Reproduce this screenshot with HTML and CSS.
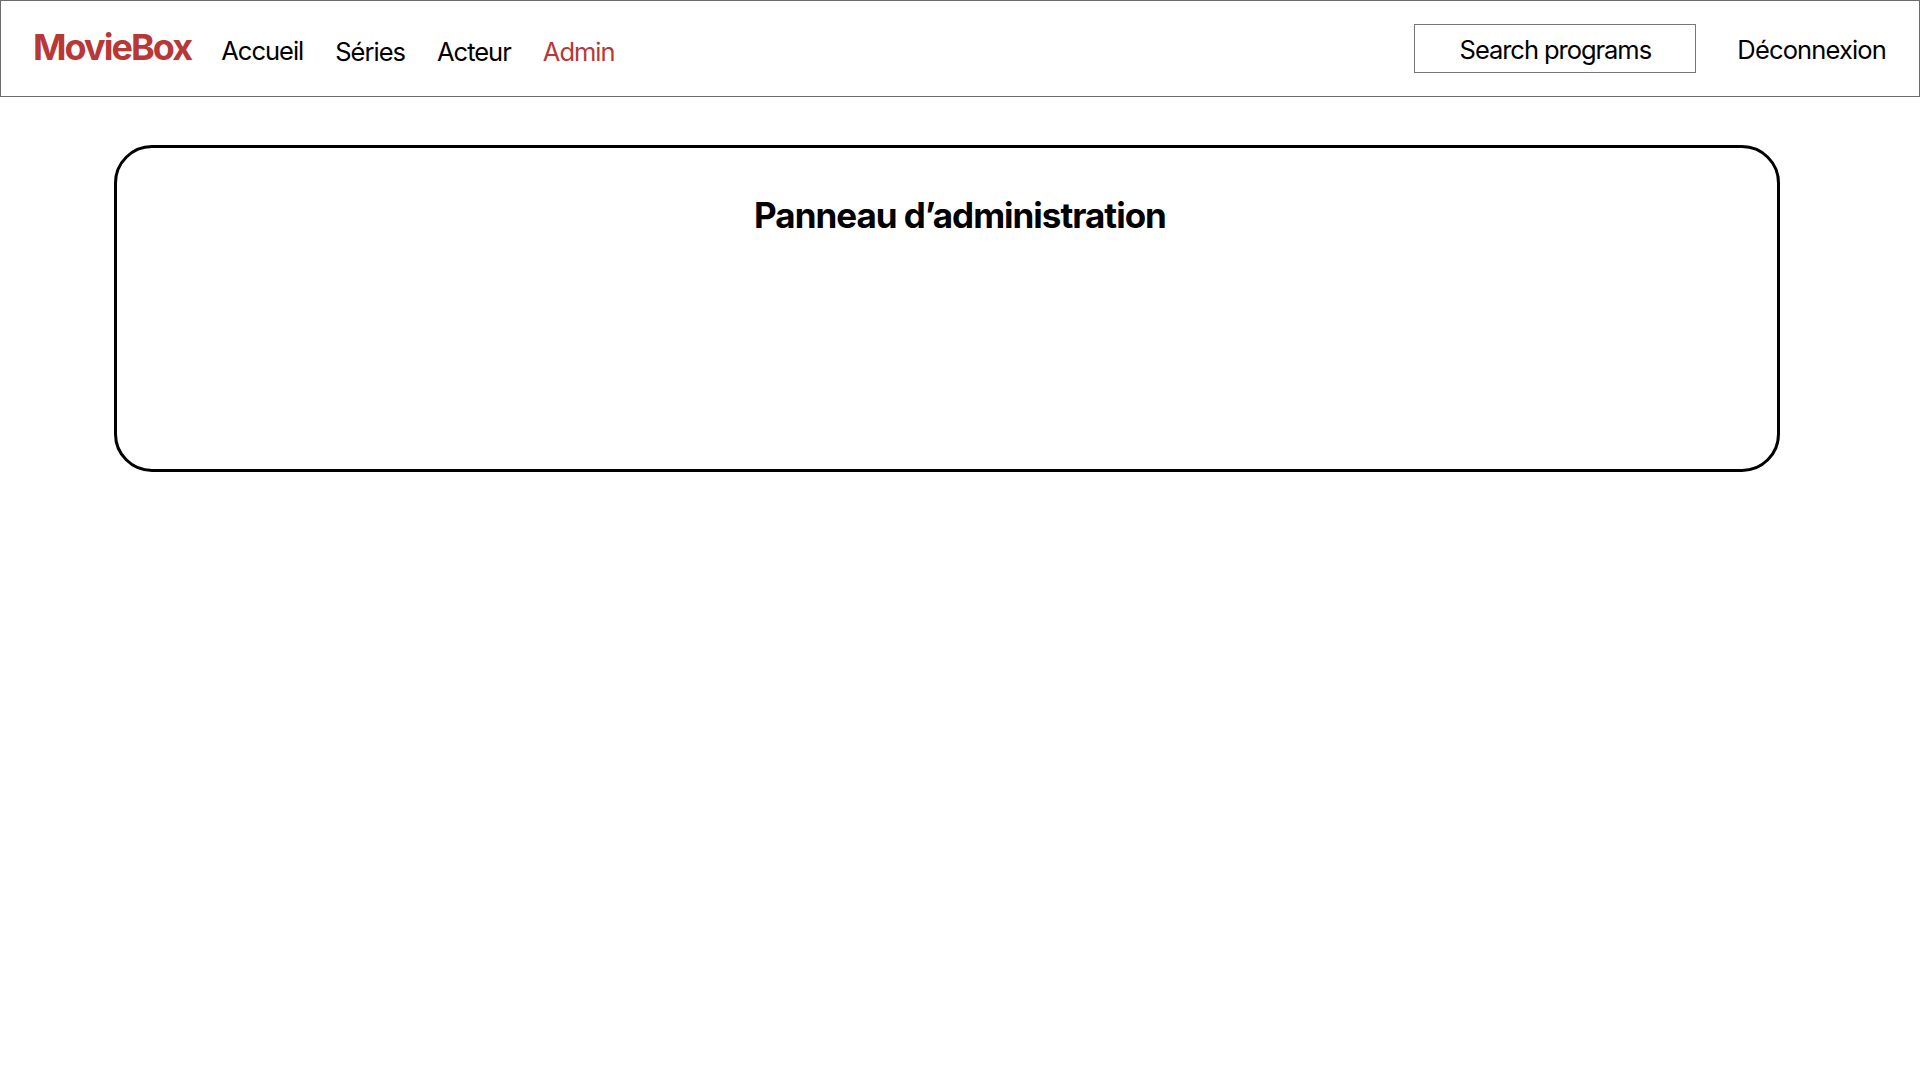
FILE: index.html
```html
<!DOCTYPE html>
<html lang="fr">
<head>
<meta charset="utf-8">
<title>MovieBox - Admin</title>
<link rel="stylesheet" href="styles.css">
</head>
<body>
<header class="topbar">
  <a class="logo" href="#">MovieBox</a>
  <nav class="nav">
    <a class="nav-link nav-home" href="#">Accueil</a>
    <a class="nav-link" href="#">Séries</a>
    <a class="nav-link" href="#">Acteur</a>
    <a class="nav-link active" href="#">Admin</a>
  </nav>
  <div class="spacer"></div>
  <div class="search">Search programs</div>
  <a class="logout" href="#">Déconnexion</a>
</header>
<main class="main">
  <section class="card">
    <h1 class="card-title">Panneau d’administration</h1>
  </section>
</main>
</body>
</html>
```

FILE: styles.css
```css
* { box-sizing: border-box; }
html, body { margin: 0; padding: 0; background: #fff; }
body {
  font-family: Inter, "Liberation Sans", sans-serif;
  color: #000;
}
a { text-decoration: none; color: inherit; }

.topbar {
  height: 97px;
  border: 1px solid #6b6b6b;
  display: flex;
  align-items: center;
  padding: 0 33px 0 32px;
}
.logo {
  font-size: 36px;
  font-weight: 700;
  color: #b83838;
  letter-spacing: -1.95px;
  margin-top: -4px;
}
.nav {
  display: flex;
  align-items: center;
  gap: 32px;
  margin-left: 30px;
}
.nav-link {
  font-size: 25.5px;
  font-weight: 400;
  letter-spacing: -1px;
  color: #000;
  padding-top: 6px;
}
.nav-home { padding-top: 4px; }
.nav-link.active { color: #b83838; }
.spacer { flex: 1; }
.search {
  width: 282px;
  height: 49px;
  border: 1px solid #777;
  display: flex;
  align-items: center;
  justify-content: center;
  font-size: 25.5px;
  letter-spacing: -1.05px;
  padding-top: 2px;
}
.logout {
  font-size: 25.5px;
  letter-spacing: -0.85px;
  margin-left: 41px;
  padding-top: 2px;
}

.main {
  padding: 48px 140px 0 114px;
}
.card {
  height: 327px;
  border: 3px solid #000;
  border-radius: 38px;
  padding: 46px 0 0 26px;
}
.card-title {
  margin: 0;
  text-align: center;
  font-size: 35px;
  font-weight: 700;
  letter-spacing: -1px;
}
```
